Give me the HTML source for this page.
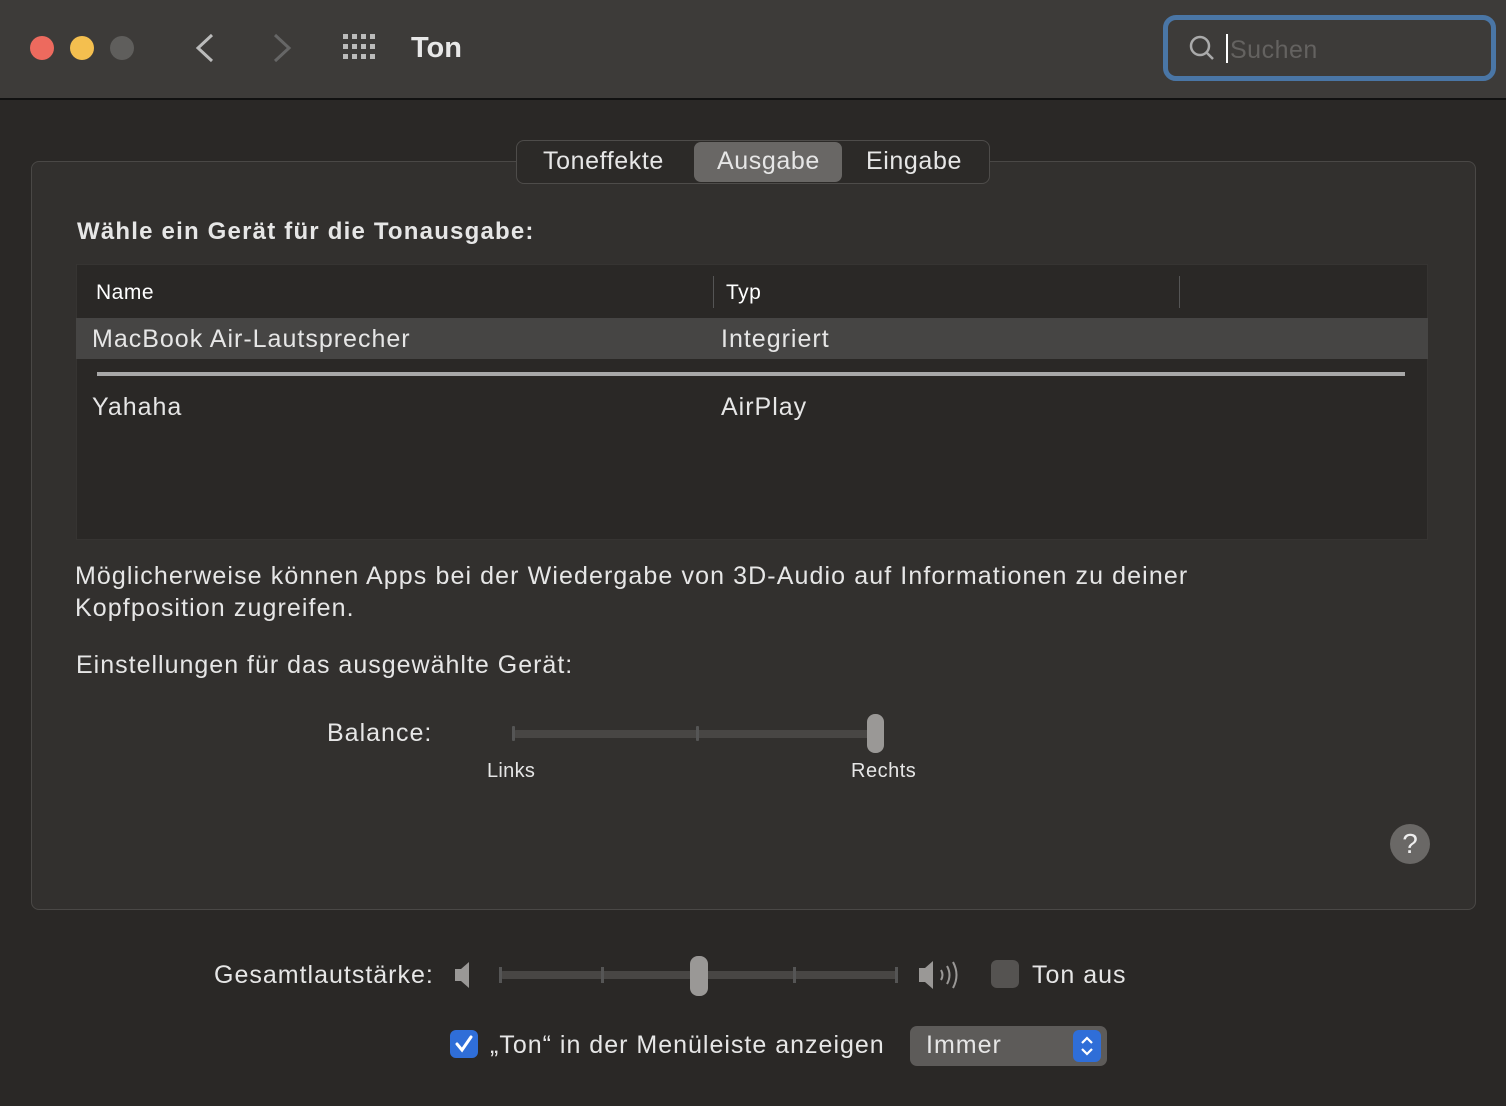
<!DOCTYPE html>
<html><head><meta charset="utf-8"><style>
*{margin:0;padding:0;box-sizing:border-box}
body{width:1506px;height:1106px;background:#2a2826;font-family:"Liberation Sans",sans-serif;color:#e6e6e6;position:relative;overflow:hidden}
.a{position:absolute;white-space:nowrap}
.title{left:0;top:0;width:1506px;height:100px;background:#3d3b39;border-bottom:2px solid #111}
.dot{width:24px;height:24px;border-radius:50%;top:36px}
.box{left:31px;top:161px;width:1445px;height:749px;background:#32302e;border:1px solid #4a4846;border-radius:8px}
.seg{left:516px;top:140px;width:474px;height:44px;background:#2c2a28;border:1px solid #4e4c4a;border-radius:8px}
.t24{font-size:25px;letter-spacing:1px}
</style></head><body>
<div class="a title"></div>
<div class="a dot" style="left:30px;background:#ed6a5e"></div>
<div class="a dot" style="left:70px;background:#f4bf4f"></div>
<div class="a dot" style="left:110px;background:#5f5e5c"></div>
<svg class="a" style="left:190px;top:30px" width="110" height="36"><path d="M22 5 L8 18 L22 31" stroke="#bbb" stroke-width="3" fill="none"/><path d="M85 5 L99 18 L85 31" stroke="#666" stroke-width="3" fill="none"/></svg>
<svg class="a" style="left:343px;top:34px" width="38" height="28"><g fill="#bbb">
<rect x="0" y="0" width="5" height="5"/><rect x="9" y="0" width="5" height="5"/><rect x="18" y="0" width="5" height="5"/><rect x="27" y="0" width="5" height="5"/>
<rect x="0" y="10" width="5" height="5"/><rect x="9" y="10" width="5" height="5"/><rect x="18" y="10" width="5" height="5"/><rect x="27" y="10" width="5" height="5"/>
<rect x="0" y="20" width="5" height="5"/><rect x="9" y="20" width="5" height="5"/><rect x="18" y="20" width="5" height="5"/><rect x="27" y="20" width="5" height="5"/></g></svg>
<div class="a" style="left:411px;top:32px;font-size:29px;font-weight:bold;color:#e8e8e8">Ton</div>
<div class="a" style="left:1163px;top:15px;width:333px;height:66px;border:5px solid #4a76a6;border-radius:13px;background:#3d3b39"></div>
<svg class="a" style="left:1188px;top:34px" width="30" height="30"><circle cx="12" cy="12" r="9" stroke="#aaa" stroke-width="2.5" fill="none"/><path d="M18.5 18.5 L25 25" stroke="#aaa" stroke-width="2.5"/></svg>
<div class="a" style="left:1226px;top:34px;width:2px;height:29px;background:#fff"></div>
<div class="a" style="left:1230px;top:36px;font-size:25px;color:#646260;letter-spacing:.5px">Suchen</div>

<div class="a box"></div>
<div class="a seg"></div>
<div class="a" style="left:694px;top:142px;width:148px;height:40px;background:#696765;border-radius:7px"></div>
<div class="a t24" style="left:543px;top:147px;letter-spacing:.6px">Toneffekte</div>
<div class="a t24" style="left:717px;top:147px;letter-spacing:.6px">Ausgabe</div>
<div class="a t24" style="left:866px;top:147px;letter-spacing:.6px">Eingabe</div>

<div class="a" style="left:77px;top:218px;font-size:24px;font-weight:bold;letter-spacing:1.2px">Wähle ein Gerät für die Tonausgabe:</div>
<div class="a" style="left:76px;top:264px;width:1352px;height:276px;background:#2a2826;border:1px solid #363432"></div>
<div class="a" style="left:96px;top:281px;font-size:21px;color:#fff;letter-spacing:.5px">Name</div>
<div class="a" style="left:713px;top:276px;width:1px;height:32px;background:#555"></div>
<div class="a" style="left:726px;top:281px;font-size:21px;color:#fff;letter-spacing:.5px">Typ</div>
<div class="a" style="left:1179px;top:276px;width:1px;height:32px;background:#555"></div>
<div class="a" style="left:76px;top:318px;width:1352px;height:41px;background:#464544"></div>
<div class="a t24" style="left:92px;top:325px">MacBook Air-Lautsprecher</div>
<div class="a t24" style="left:721px;top:325px">Integriert</div>
<div class="a" style="left:97px;top:372px;width:1308px;height:4px;background:#a8a8a8"></div>
<div class="a t24" style="left:92px;top:393px">Yahaha</div>
<div class="a t24" style="left:721px;top:393px">AirPlay</div>

<div class="a t24" style="left:75px;top:560px;line-height:32px;letter-spacing:1.1px">Möglicherweise können Apps bei der Wiedergabe von 3D-Audio auf Informationen zu deiner<br>Kopfposition zugreifen.</div>
<div class="a t24" style="left:76px;top:651px">Einstellungen für das ausgewählte Gerät:</div>
<div class="a t24" style="left:327px;top:719px">Balance:</div>
<div class="a" style="left:513px;top:730px;width:362px;height:8px;background:#484644;border-radius:3px"></div>
<div class="a" style="left:512px;top:726px;width:3px;height:15px;background:#555;border-radius:1px"></div>
<div class="a" style="left:696px;top:726px;width:3px;height:15px;background:#555;border-radius:1px"></div>
<div class="a" style="left:867px;top:714px;width:17px;height:39px;background:#9a9896;border-radius:8px"></div>
<div class="a" style="left:487px;top:760px;font-size:20px;letter-spacing:.3px">Links</div>
<div class="a" style="left:851px;top:760px;font-size:20px;letter-spacing:.5px">Rechts</div>
<div class="a" style="left:1390px;top:824px;width:40px;height:40px;border-radius:50%;background:#6a6866;color:#eee;font-size:28px;text-align:center;line-height:40px">?</div>

<div class="a t24" style="left:214px;top:961px">Gesamtlautstärke:</div>
<svg class="a" style="left:453px;top:958px" width="25" height="34"><path d="M2 11 H8 L16 4 V30 L8 23 H2 Z" fill="#9a9896"/></svg>
<div class="a" style="left:500px;top:971px;width:398px;height:8px;background:#484644;border-radius:3px"></div>
<div class="a" style="left:499px;top:967px;width:3px;height:16px;background:#555"></div>
<div class="a" style="left:601px;top:967px;width:3px;height:16px;background:#555"></div>
<div class="a" style="left:793px;top:967px;width:3px;height:16px;background:#555"></div>
<div class="a" style="left:895px;top:967px;width:3px;height:16px;background:#555"></div>
<div class="a" style="left:690px;top:956px;width:18px;height:40px;background:#9a9896;border-radius:8px"></div>
<svg class="a" style="left:917px;top:956px" width="50" height="40"><path d="M2 12 H8 L16 5 V33 L8 26 H2 Z" fill="#9a9896"/><path d="M24 14 Q27 19 24 24 M30 10 Q35 19 30 28 M36 6 Q43 19 36 32" stroke="#9a9896" stroke-width="2" fill="none"/></svg>
<div class="a" style="left:991px;top:960px;width:28px;height:28px;background:#555351;border-radius:6px"></div>
<div class="a t24" style="left:1032px;top:961px">Ton aus</div>
<div class="a" style="left:450px;top:1030px;width:28px;height:28px;background:#2f6ed8;border-radius:6px"></div>
<svg class="a" style="left:450px;top:1030px" width="28" height="28"><path d="M7 14 L12 20 L21 7" stroke="#fff" stroke-width="3" fill="none" stroke-linecap="round"/></svg>
<div class="a t24" style="left:490px;top:1031px">„Ton“ in der Menüleiste anzeigen</div>
<div class="a" style="left:910px;top:1026px;width:197px;height:40px;background:#5d5b59;border-radius:7px"></div>
<div class="a t24" style="left:926px;top:1031px">Immer</div>
<div class="a" style="left:1073px;top:1030px;width:28px;height:32px;background:#2f6ed8;border-radius:6px"></div>
<svg class="a" style="left:1073px;top:1030px" width="28" height="32"><path d="M9 13 L14 8 L19 13 M9 19 L14 24 L19 19" stroke="#fff" stroke-width="2.2" fill="none"/></svg>
</body></html>
